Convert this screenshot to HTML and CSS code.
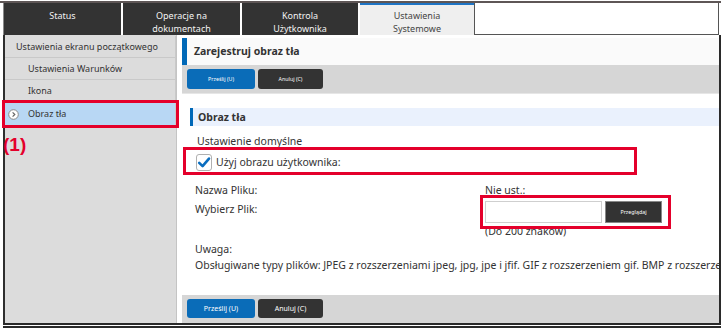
FILE: index.html
```html
<!DOCTYPE html>
<html lang="pl">
<head>
<meta charset="utf-8">
<title>Obraz tła</title>
<link rel="stylesheet" href="styles.css">
</head>
<body>
<div class="app">
  <div class="tabs">
    <div class="tab first">Status</div>
    <div class="tab">Operacje na<br>dokumentach</div>
    <div class="tab">Kontrola<br>Użytkownika</div>
    <div class="tab active">Ustawienia<br>Systemowe</div>
    <div class="tab-rest"></div>
  </div>
  <div class="body">
    <nav class="side">
      <div class="side-item">Ustawienia ekranu początkowego</div>
      <div class="side-item sub">Ustawienia Warunków</div>
      <div class="side-item sub">Ikona</div>
      <div class="side-item selected">
        <svg class="chev" width="11" height="11" viewBox="0 0 11 11"><circle cx="5.5" cy="5.5" r="4.8" fill="#fff" stroke="#8a8a8a" stroke-width="1"/><path d="M4.6 3.3 L6.8 5.5 L4.6 7.7" fill="none" stroke="#666" stroke-width="1.2"/></svg>
        <span>Obraz tła</span>
      </div>
    </nav>
    <main class="main">
      <div class="page-head">Zarejestruj obraz tła</div>
      <div class="actions top">
        <button class="btn primary">Prześlij (U)</button>
        <button class="btn dark">Anuluj (C)</button>
      </div>
      <div class="section-head">Obraz tła</div>
      <div class="form">
        <div class="line default">Ustawienie domyślne</div>
        <div class="check-row">
          <span class="checkbox"><svg width="16" height="17" viewBox="0 0 16 17"><path d="M3.2 8.8 L6.6 12.2 L13 4.6" fill="none" stroke="#0a6ec0" stroke-width="2.6" stroke-linecap="round" stroke-linejoin="round"/></svg></span>
          <span>Użyj obrazu użytkownika:</span>
        </div>
        <div class="grid">
          <div class="line">Nazwa Pliku:</div>
          <div class="line">Nie ust.:</div>
          <div class="line">Wybierz Plik:</div>
          <div class="file">
            <span class="file-input"></span>
            <button class="browse">Przeglądaj</button>
          </div>
          <div></div>
          <div class="line limit">(Do 200 znaków)</div>
        </div>
        <div class="line note">Uwaga:</div>
        <div class="line nowrap">Obsługiwane typy plików: JPEG z rozszerzeniami jpeg, jpg, jpe i jfif. GIF z rozszerzeniem gif. BMP z rozszerzeniem bmp.</div>
      </div>
      <div class="actions bottom">
        <button class="btn primary">Prześlij (U)</button>
        <button class="btn dark">Anuluj (C)</button>
      </div>
    </main>
  </div>
  <div class="mark mark-side"></div>
  <div class="mark-label">(1)</div>
  <div class="mark mark-check"></div>
  <div class="mark mark-file"></div>
</div>
</body>
</html>
```

FILE: styles.css
```css
* { box-sizing: border-box; }
html, body { margin: 0; padding: 0; background: #fff; }
body { font-family: "Noto Sans", "Open Sans", sans-serif; color: #333; }

.app {
  position: relative;
  width: 721px;
  height: 328px;
  overflow: hidden;
}

/* tabs */
.tabs {
  display: flex;
  gap: 2px;
  height: 34px;
  margin-top: 1px;
  border-top: 2px solid #5e5656;
  padding-left: 3px;
}
.tab {
  width: 117px;
  background: #333;
  color: #f2f2f2;
  font-size: 9px;
  line-height: 12.5px;
  text-align: center;
  padding-top: 7px;
}
.tab.first { width: 118px; border-left: 1px solid #8a8a8a; }
.tab:nth-child(3) { width: 116px; }
.tab.active {
  width: 114px;
  background: #efefef;
  color: #444;
  border-top: 2px solid #1e74c4;
  padding-top: 5px;
}
.tab-rest {
  flex: 1;
  background: #fff;
  border: 1px solid #555;
  border-top: none;
  margin-left: -2px;
  margin-right: 2px;
}

/* body */
.body {
  display: flex;
  height: 293px;
  margin-left: 3px;
  border-bottom: 5px double #2a2a2a;
}
.side {
  width: 174px;
  flex: none;
  background: #dcdcdc;
  border-left: 2px solid #2e2e2e;
  border-right: 1px solid #c4c4c4;
  padding-top: 1px;
}
.side-item {
  height: 22px;
  line-height: 22px;
  border-bottom: 1px solid #c9c9c9;
  border-right: 1px solid #c9c9c9;
  font-size: 9px;
  padding-left: 11px;
  color: #333;
  white-space: nowrap;
}
.side-item.sub { padding-left: 23px; }
.side-item.selected {
  height: 25px;
  background: #b8d7f4;
  display: flex;
  align-items: center;
  gap: 9px;
  padding-left: 3px;
}
.chev { flex: none; }

.main {
  flex: 1;
  min-width: 0;
  display: flex;
  flex-direction: column;
  padding-left: 5px;
  border-right: 2px solid #2a2a2a;
  overflow: hidden;
}
.page-head {
  margin-top: 3px;
  height: 27px;
  line-height: 27px;
  border-left: 5px solid #0068b7;
  background: #fafafa;
  padding-left: 7px;
  font-size: 10.5px;
  font-weight: 700;
  color: #333;
}
.actions {
  display: flex;
  gap: 3px;
  background: #d6d6d6;
  padding: 4px 0 0 5px;
  flex: none;
}
.actions.top { height: 29px; border-bottom: 1px solid #e6e6e6; }
.actions.bottom { height: 28px; margin-top: auto; }
.btn {
  border: none;
  border-radius: 3px;
  color: #fff;
  font-family: inherit;
  padding: 0;
}
.top .btn { height: 20px; font-size: 5.3px; }
.bottom .btn { height: 19px; font-size: 7px; }
.btn.primary { width: 68px; background: #0a6cb8; }
.btn.dark { width: 65px; background: #333; }

.section-head {
  margin: 14px 0 0 8px;
  height: 18px;
  line-height: 18px;
  border-left: 3px solid #0068b7;
  background: #eaf1fd;
  padding-left: 5px;
  font-size: 10.5px;
  font-weight: 700;
}

.form {
  padding-left: 13px;
  font-size: 10.5px;
}
.line { line-height: 16px; }
.default { margin-top: 7px; padding-left: 2px; }
.nowrap { white-space: nowrap; }
.check-row {
  height: 26px;
  display: flex;
  align-items: center;
  gap: 4px;
}
.checkbox {
  width: 16px;
  height: 17px;
  margin-left: 1px;
  border: 1px solid #b0b0b0;
  border-radius: 3px;
  background: #fff;
  position: relative;
}
.checkbox svg { position: absolute; left: -1px; top: -1px; }
.grid {
  display: grid;
  grid-template-columns: 290px 1fr;
  row-gap: 3px;
  margin-top: 7px;
}
.limit { margin-top: -3px; }
.note { margin-top: 2px; }
.file {
  display: flex;
  gap: 3px;
  height: 22px;
}
.file-input {
  width: 117px;
  border: 1px solid #cfcfcf;
  background: #fff;
}
.browse {
  width: 57px;
  background: #333;
  border: 1px solid #888;
  color: #fff;
  font-family: inherit;
  font-size: 5.3px;
  padding: 0;
}

/* annotations */
.mark {
  position: absolute;
  border: 3px solid #e4002b;
}
.mark-side { left: 2px; top: 100px; width: 177px; height: 28px; }
.mark-check { left: 183px; top: 147px; width: 454px; height: 28px; }
.mark-file { left: 480px; top: 195px; width: 191px; height: 34px; }
.mark-label {
  position: absolute;
  left: 3px;
  top: 134px;
  font-family: "Liberation Sans", Arial, sans-serif;
  font-weight: 700;
  font-size: 19px;
  line-height: 22px;
  color: #e4002b;
}
```
